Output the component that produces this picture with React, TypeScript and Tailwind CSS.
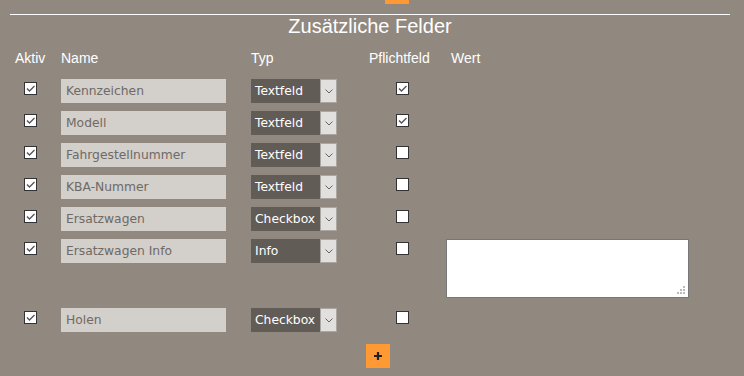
type Row = {
  name: string;
  typ: string;
  pflicht: boolean;
  wert?: boolean;
};

const rows: Row[] = [
  { name: "Kennzeichen", typ: "Textfeld", pflicht: true },
  { name: "Modell", typ: "Textfeld", pflicht: true },
  { name: "Fahrgestellnummer", typ: "Textfeld", pflicht: false },
  { name: "KBA-Nummer", typ: "Textfeld", pflicht: false },
  { name: "Ersatzwagen", typ: "Checkbox", pflicht: false },
  { name: "Ersatzwagen Info", typ: "Info", pflicht: false, wert: true },
  { name: "Holen", typ: "Checkbox", pflicht: false },
];

function Box({ checked }: { checked: boolean }) {
  return (
    <div className="h-[13px] w-[13px] border border-[#333] bg-white">
      {checked && (
        <svg width="11" height="11" viewBox="0 0 11 11" className="block">
          <path d="M2 5.5 L4.5 8 L9.5 3" fill="none" stroke="#555" strokeWidth="1.4" />
        </svg>
      )}
    </div>
  );
}

function Select({ value }: { value: string }) {
  return (
    <div className="flex h-[24px] w-[86px]">
      <div className="flex flex-1 items-center bg-[#625c57] pl-[4px] text-white">{value}</div>
      <div className="flex w-[17px] items-center justify-center border border-[#aaa7a3] bg-[#e2e0de]">
        <svg width="8" height="5" viewBox="0 0 8 5">
          <path d="M0.5 0.5 L4 4 L7.5 0.5" fill="none" stroke="#666" strokeWidth="1" />
        </svg>
      </div>
    </div>
  );
}

export default function App() {
  return (
    <div className="h-[376px] w-full overflow-hidden bg-[#918980] font-['Liberation_Sans',Arial,sans-serif] text-white">
      <div className="ml-[385px] h-[4px] w-[24px] bg-[#ff9933]" />
      <div className="mx-[10px] mt-[10px] h-px w-[720px] bg-white" />
      <div className="mx-[10px] w-[720px] text-center text-[20px] leading-[23px]">Zusätzliche Felder</div>

      <div className="mt-[12px] flex text-[14px] leading-[16px]">
        <div className="w-[61px] pl-[15px]">Aktiv</div>
        <div className="w-[190px]">Name</div>
        <div className="w-[118px]">Typ</div>
        <div className="w-[77px]">Pflichtfeld</div>
        <div className="pl-[5px]">Wert</div>
      </div>

      <div className="mt-[13px] flex flex-col gap-[8px] font-['DejaVu_Sans',Verdana,sans-serif] text-[12.3px]">
        {rows.map((r) => (
          <div key={r.name} className={`flex items-start ${r.wert ? "mb-[2px]" : ""}`}>
            <div className="w-[61px] pl-[24px] pt-[3px]">
              <Box checked />
            </div>
            <div className="w-[190px]">
              <div className="flex h-[24px] w-[165px] items-center bg-[#d3cfca] pl-[5px] text-[#6e6a66]">{r.name}</div>
            </div>
            <div className="w-[118px]">
              <Select value={r.typ} />
            </div>
            <div className="w-[77px] pl-[27px] pt-[3px]">
              <Box checked={r.pflicht} />
            </div>
            {r.wert && (
              <div className="relative h-[59px] w-[243px] border border-[#777] bg-white">
                <svg width="9" height="9" viewBox="0 0 9 9" className="absolute bottom-[2px] right-[2px]">
                  <rect x="6" y="0" width="2" height="2" fill="#bbb" />
                  <rect x="3" y="3" width="2" height="2" fill="#bbb" />
                  <rect x="6" y="3" width="2" height="2" fill="#bbb" />
                  <rect x="0" y="6" width="2" height="2" fill="#bbb" />
                  <rect x="3" y="6" width="2" height="2" fill="#bbb" />
                  <rect x="6" y="6" width="2" height="2" fill="#bbb" />
                </svg>
              </div>
            )}
          </div>
        ))}
      </div>

      <div className="ml-[366px] mt-[12px] flex h-[24px] w-[24px] items-center justify-center bg-[#ff9933]">
        <svg width="10" height="10" viewBox="0 0 10 10">
          <path d="M5 1 V9 M1 5 H9" stroke="#222" strokeWidth="2.2" />
        </svg>
      </div>
    </div>
  );
}
